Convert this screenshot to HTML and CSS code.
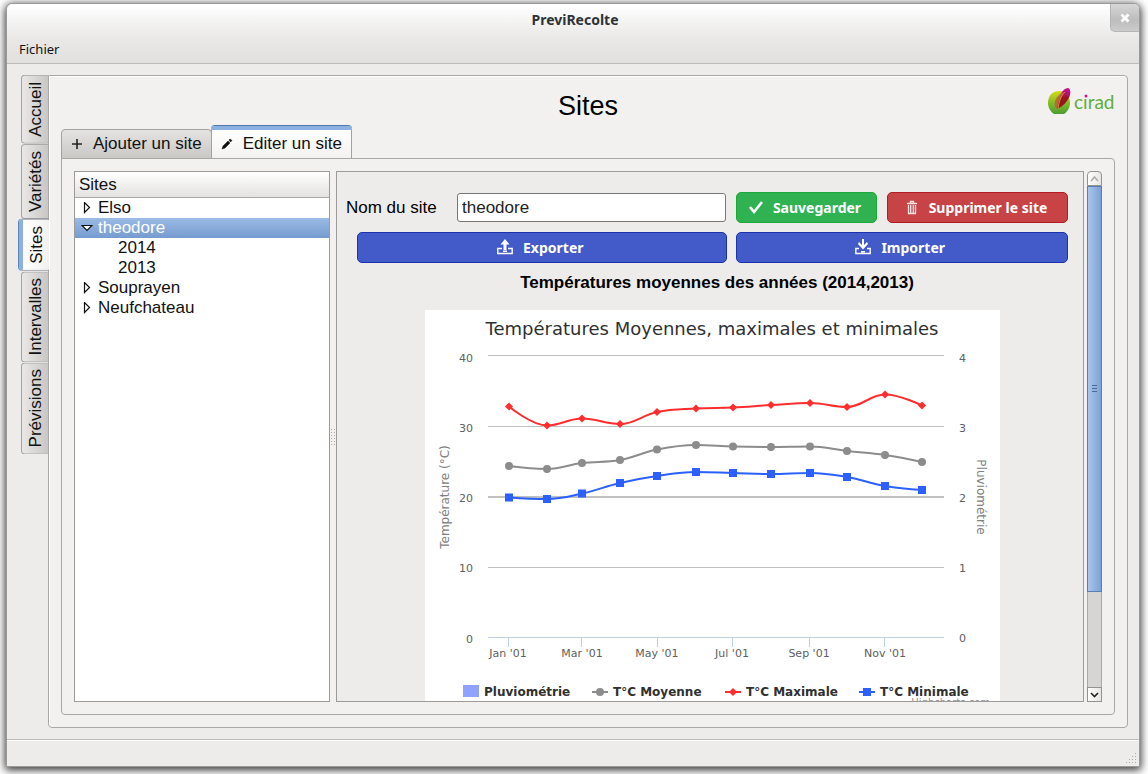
FILE: index.html
```html
<!DOCTYPE html>
<html lang="fr">
<head>
<meta charset="utf-8">
<title>PreviRecolte</title>
<link rel="stylesheet" href="styles.css">
</head>
<body>
<div class="window">
  <header class="titlebar">
    <h1 class="window-title">PreviRecolte</h1>
    <button class="close" type="button" aria-label="Fermer">
      <svg width="10" height="10" viewBox="0 0 10 10"><path d="M1.500 1.500l7 7M8.500 1.500l-7 7" stroke="#fff" stroke-width="2.800"/></svg>
    </button>
    <nav class="menubar"><button class="menu" type="button">Fichier</button></nav>
  </header>

  <main class="main">
    <nav class="side-tabs">
      <button class="side-tab" type="button">Accueil</button>
      <button class="side-tab" type="button">Variétés</button>
      <button class="side-tab side-tab-active" type="button">Sites</button>
      <button class="side-tab" type="button">Intervalles</button>
      <button class="side-tab" type="button">Prévisions</button>
    </nav>

    <section class="page">
      <div class="page-head">
        <h2 class="page-title">Sites</h2>
        <svg class="logo" width="70" height="30" viewBox="0 0 70 30" role="img" aria-label="cirad">
          <defs>
            <linearGradient id="leaf" x1="0" y1="0" x2="0" y2="1"><stop offset="0" stop-color="#d3dc18"/><stop offset=".55" stop-color="#7fb928"/><stop offset="1" stop-color="#4a9c33"/></linearGradient>
            <linearGradient id="seed" x1="0" y1="0" x2="0" y2="1"><stop offset="0" stop-color="#cf0a8c"/><stop offset=".3" stop-color="#b80d70"/><stop offset=".45" stop-color="#9c1420"/><stop offset="1" stop-color="#8e1a14"/></linearGradient>
          </defs>
          <path d="M11 4C18 4 22 10 22 16c0 5-3 9-6 11H6C3 25 0 21 0 16 0 9 4 4 11 4z" fill="url(#leaf)"/>
          <path d="M9 22C9 10 15 1 20 1c5 2 2 15-11 21z" fill="url(#seed)"/>
          <path d="M9 22C4 19 7 8 16 5c-4 5-6 10-7 17z" fill="#b5702c"/>
          <path d="M10 22C11 14 13 9 17 5" stroke="#d88a50" stroke-width="1" fill="none"/>
          <text class="logo-text" x="26" y="22">cırad</text>
          <circle cx="38" cy="9" r="1.500" fill="#d3118c"/>
        </svg>
      </div>

      <div class="tabs">
        <button class="tab" type="button">
          <svg width="12" height="12" viewBox="0 0 12 12"><path d="M6 1v10M1 6h10" stroke="#222" stroke-width="1.600"/></svg>
          Ajouter un site
        </button>
        <button class="tab tab-active" type="button">
          <svg width="12" height="12" viewBox="0 0 12 12"><path d="M1 11l1-3 5-5 2 2-5 5zM8 2l1-1 2 1.500-1.500 1.500z" fill="#111" stroke="#111" stroke-width=".5"/></svg>
          Editer un site
        </button>
      </div>

      <div class="panel">
        <div class="tree">
          <div class="tree-head">Sites</div>
          <ul class="tree-list">
            <li class="row"><svg class="arrow" width="12" height="12" viewBox="0 0 12 12"><path d="M3.500 .500v10l5-5z"/></svg>Elso</li>
            <li class="row row-selected"><svg class="arrow" width="12" height="12" viewBox="0 0 12 12"><path d="M1 3.500h10L6 8.500z"/></svg>theodore</li>
            <li class="row row-child">2014</li>
            <li class="row row-child">2013</li>
            <li class="row"><svg class="arrow" width="12" height="12" viewBox="0 0 12 12"><path d="M3.500 .500v10l5-5z"/></svg>Souprayen</li>
            <li class="row"><svg class="arrow" width="12" height="12" viewBox="0 0 12 12"><path d="M3.500 .500v10l5-5z"/></svg>Neufchateau</li>
          </ul>
        </div>
        <div class="splitter"><span class="grip"></span></div>

        <div class="detail">
          <form class="form">
            <div class="form-row">
              <label class="label" for="site-name">Nom du site</label>
              <input class="input" id="site-name" type="text" value="theodore">
              <button class="btn btn-save" type="button">
                <svg width="16" height="16" viewBox="0 0 16 16"><path d="M2 7l4 5 8-10" stroke="#fff" stroke-width="2.600" fill="none"/></svg>
                Sauvegarder
              </button>
              <button class="btn btn-delete" type="button">
                <svg width="16" height="16" viewBox="0 0 16 16"><path d="M3 3.500h10M6.500 3V1.500h3V3M4.500 5v8.500h7V5M6.700 5v8M9.300 5v8" stroke="#fbe3e3" stroke-width="1.300" fill="none"/></svg>
                Supprimer le site
              </button>
            </div>
            <div class="form-row form-row-files">
              <button class="btn btn-file btn-export" type="button">
                <svg width="18" height="18" viewBox="0 0 18 18"><path d="M6 9.500H1.800v5h14.400v-5H12M7 12.200h4" stroke="#fff" stroke-width="1.400" fill="none"/><path d="M9 0l4.500 5.500h-3V11h-3V5.500h-3z" fill="#fff"/></svg>
                Exporter
              </button>
              <button class="btn btn-file btn-import" type="button">
                <svg width="18" height="18" viewBox="0 0 18 18"><path d="M5 9.500H1.800v5h14.400v-5H13M7 12.700h4" stroke="#fff" stroke-width="1.400" fill="none"/><path d="M8 0h2v6l3-3 1 2-5 5.500L4 5l1-2 3 3z" fill="#fff"/></svg>
                Importer
              </button>
            </div>
          </form>
          <h3 class="chart-heading">Températures moyennes des années (2014,2013)</h3>
          <svg class="chart" width="575" height="400" viewBox="0 0 575 400">
            <rect width="575" height="400" fill="#fff"/>
            <text class="chart-title" x="287" y="25">Températures Moyennes, maximales et minimales</text>
            <path class="grid" d="M63 45.500H519M63 116.500H519M63 257.500H519"/>
            <path class="grid grid-strong" d="M63 187H519"/>
            <path class="axis" d="M63 327.500H519M83.500 328v9M156.500 328v9M232.500 328v9M307.500 328v9M384.500 328v9M459.500 328v9"/>
            <g class="tick tick-left">
              <text x="48" y="52">40</text><text x="48" y="122">30</text><text x="48" y="192">20</text><text x="48" y="262">10</text><text x="48" y="333">0</text>
            </g>
            <g class="tick">
              <text x="534" y="52">4</text><text x="534" y="122">3</text><text x="534" y="192">2</text><text x="534" y="262">1</text><text x="534" y="332">0</text>
            </g>
            <g class="tick tick-month">
              <text x="83" y="347">Jan '01</text><text x="157" y="347">Mar '01</text><text x="232" y="347">May '01</text><text x="307" y="347">Jul '01</text><text x="384" y="347">Sep '01</text><text x="460" y="347">Nov '01</text>
            </g>
            <text class="axis-title" transform="translate(24 187) rotate(-90)">Température (°C)</text>
            <text class="axis-title" transform="translate(552 187) rotate(90)">Pluviométrie</text>
            <g id="series"></g>
            <rect x="38" y="375" width="16" height="12" fill="#8fa2ff"/>
            <path d="M167 382h16" stroke="#8c8c8c" stroke-width="2"/><circle cx="175" cy="382" r="4" fill="#8c8c8c"/>
            <path d="M300 382h16" stroke="#ff2d2d" stroke-width="2"/><path d="M308 378l4 4-4 4-4-4z" fill="#ff2d2d"/>
            <path d="M434 382h16" stroke="#2b60ff" stroke-width="2"/><rect x="438" y="378" width="8" height="8" fill="#2b60ff"/>
            <g class="legend">
              <text x="59" y="386">Pluviométrie</text><text x="188" y="386">T°C Moyenne</text><text x="321" y="386">T°C Maximale</text><text x="455" y="386">T°C Minimale</text>
            </g>
            <text class="credit" x="565" y="396">Highcharts.com</text>
          </svg>
        </div>

        <div class="scrollbar">
          <button class="scroll-btn scroll-up" type="button" aria-label="Haut"><svg width="9" height="6" viewBox="0 0 9 6"><path d="M1 5l3.500-4L8 5" stroke="#aaa" stroke-width="1.500" fill="none"/></svg></button>
          <div class="track"><div class="thumb"><span class="thumb-grip"></span></div></div>
          <button class="scroll-btn" type="button" aria-label="Bas"><svg width="9" height="6" viewBox="0 0 9 6"><path d="M1 1l3.500 3.500L8 1" stroke="#222" stroke-width="1.600" fill="none"/></svg></button>
        </div>
      </div>
    </section>
  </main>

  <footer class="statusbar">
    <svg width="12" height="12" viewBox="0 0 12 12" fill="#aaa"><path d="M10 1h1v1h-1zM10 4h1v1h-1zM7 4h1v1h-1zM10 7h1v1h-1zM7 7h1v1h-1zM4 7h1v1h-1zM10 10h1v1h-1zM7 10h1v1h-1zM4 10h1v1h-1zM1 10h1v1h-1z"/></svg>
  </footer>
</div>
<script src="chart.js"></script>
</body>
</html>
```
FILE: styles.css
```css
* { box-sizing: border-box; }
body {
  margin: 0;
  min-height: 100vh;
  display: flex;
  padding: 3px 8px 8px 6px;
  background: #fff;
  font: 17px/20px "Liberation Sans", Arial, sans-serif;
  color: #111;
}
button { font: inherit; color: inherit; margin: 0; }
h1, h2, h3, ul { margin: 0; padding: 0; font-weight: normal; }
svg { flex: none; }

.window {
  flex: 1;
  min-width: 0;
  display: flex;
  flex-direction: column;
  border: 1px solid #9a9a9a;
  border-radius: 6px 6px 0 0;
  background: #edeceb;
  box-shadow: 0 2px 8px 1px rgba(0, 0, 0, .8);
}
.titlebar {
  position: relative;
  border-bottom: 1px solid #bcbbb9;
  border-radius: 6px 6px 0 0;
  background: linear-gradient(#fff, #e9e8e7 60%, #e1e0df);
  font-family: "Noto Sans", "Open Sans", sans-serif;
}
.window-title {
  height: 31px;
  padding-left: 4px;
  font-size: 14px;
  line-height: 31px;
  font-weight: 700;
  text-align: center;
  color: #2e3436;
}
.close {
  position: absolute;
  top: 0;
  right: 0;
  width: 29px;
  height: 28px;
  display: flex;
  align-items: center;
  justify-content: center;
  padding: 0;
  border: 1px solid #b5b5b5;
  border-width: 0 0 1px 1px;
  border-radius: 0 5px 0 5px;
  background: linear-gradient(#d6d6d6, #bdbdbd 60%, #cbcbcb);
}
.menubar { height: 28px; padding: 4px 12px; }
.menu { display: block; padding: 0; border: 0; background: none; font-size: 13px; line-height: 20px; }

.main {
  flex: 1;
  min-height: 0;
  display: flex;
  padding: 11px;
}
.side-tabs {
  display: flex;
  flex-direction: column;
  align-items: flex-end;
  width: 30px;
}
.side-tab {
  width: 27px;
  writing-mode: vertical-rl;
  transform: rotate(180deg);
  padding: 6px 0;
  line-height: 25px;
  border: 1px solid #a3a2a0;
  border-left: 0;
  border-radius: 0 4px 4px 0;
  background: linear-gradient(to left, #e9e8e6, #c8c7c4);
}
.side-tab-active {
  position: relative;
  width: 30px;
  margin-right: -1px;
  border-color: #8a8a8a;
  border-right: 4px solid #8cb0e0;
  box-shadow: 1px 0 0 #5b83b8;
  background: linear-gradient(to left, #fff, #f2f1f0);
}
.page {
  flex: 1;
  min-width: 0;
  display: flex;
  flex-direction: column;
  padding: 0 12px 12px;
  border: 1px solid #a9a8a6;
  border-radius: 0 4px 4px 4px;
  background: #f2f1f0;
  box-shadow: inset 1px 1px #fff;
}
.page-head {
  display: grid;
  grid-template-columns: 1fr auto 1fr;
  align-items: center;
  height: 50px;
  padding-top: 10px;
}
.page-title {
  grid-column: 2;
  font-size: 27px;
  line-height: 30px;
  color: #000;
}
.logo { justify-self: end; margin-bottom: 8px; margin-right: -3px; }
.logo-text { font: 19px "Lato", sans-serif; fill: #5fae38; }

.tabs { display: flex; align-items: flex-end; height: 33px; margin-bottom: -1px; }
.tab {
  display: flex;
  align-items: center;
  gap: 10px;
  height: 30px;
  padding: 0 9px;
  border: 1px solid #a3a2a0;
  border-radius: 4px 4px 0 0;
  background: linear-gradient(#e4e3e1, #c9c8c5);
  white-space: nowrap;
}
.tab-active {
  height: 33px;
  margin-left: -1px;
  padding-bottom: 2px;
  border-top: 4px solid #8cb0e0;
  border-bottom: 0;
  box-shadow: 0 -1px #4f79af;
  background: linear-gradient(#fff, #f2f1f0);
}
.panel {
  flex: 1;
  min-height: 0;
  display: flex;
  padding: 12px;
  border: 1px solid #a9a8a6;
  border-radius: 0 4px 4px 4px;
}
.tree {
  width: 256px;
  flex: none;
  border: 1px solid #9c9b99;
  background: #fff;
}
.tree-head {
  height: 26px;
  padding: 3px 4px;
  border-bottom: 1px solid #a9a8a6;
  background: linear-gradient(#fff, #e3e2e0);
}
.tree-list { list-style: none; }
.row { display: flex; align-items: center; gap: 5px; height: 20px; padding-left: 6px; line-height: 20px; }
.row-child { padding-left: 43px; }
.row-selected { color: #fff; background: linear-gradient(#9bbbe5, #759bcf); }
.arrow path { fill: #fff; stroke: #111; stroke-width: 1.200; }

.splitter { width: 6px; flex: none; display: flex; align-items: center; justify-content: center; }
.grip {
  width: 6px;
  height: 18px;
  background: radial-gradient(circle, #aaa 1px, transparent 1px) 0 0 / 3px 3px;
}
.detail {
  flex: 1;
  min-width: 0;
  height: 531px;
  min-height: 100%;
  overflow: hidden;
  padding: 20px 5px 0 9px;
  border: 1px solid #9c9b99;
  background: #edeceb;
}
.form { display: flex; flex-direction: column; gap: 9px; padding-right: 10px; }
.form-row { display: flex; align-items: center; gap: 10px; }
.form-row-files { padding-left: 11px; gap: 9px; }
.label { width: 101px; color: #000; white-space: nowrap; }
.input {
  flex: 1;
  min-width: 0;
  height: 29px;
  padding: 0 4px;
  border: 1px solid #787776;
  border-radius: 3px;
  background: #fff;
  font: inherit;
  color: #222;
}
.btn {
  display: flex;
  align-items: center;
  justify-content: center;
  gap: 9px;
  height: 31px;
  padding: 0 14px 0 10px;
  border: 1px solid;
  border-radius: 5px;
  font: 700 14px/20px "Noto Sans", "Open Sans", sans-serif;
  color: #fff;
  white-space: nowrap;
}
.btn-save { width: 141px; border-color: #1da83a; background: #30b253; }
.btn-delete { width: 181px; border-color: #b01c1f; background: #c74345; }
.btn-file { border-color: #1a33ad; background: #435bc9; }
.btn-export { flex: 371; }
.btn-import { flex: 331; }
.chart-heading {
  margin: 10px 0 17px;
  padding-left: 10px;
  font-size: 17px;
  line-height: 20px;
  font-weight: 700;
  text-align: center;
  color: #000;
}
.chart { display: block; margin: 0 auto; font-family: "DejaVu Sans", sans-serif; }
.chart-title { font-size: 18px; text-anchor: middle; fill: #303030; }
.grid { stroke: #c0c0c0; fill: none; }
.grid-strong { stroke-width: 2; }
.axis { stroke: #c0d0e0; fill: none; }
.tick { font-size: 11px; fill: #606060; }
.tick-left { text-anchor: end; }
.tick-month { text-anchor: middle; }
.axis-title { font-size: 12px; text-anchor: middle; fill: #808080; }
.legend { font-size: 12px; font-weight: 700; fill: #303030; }
.credit { font-size: 10px; text-anchor: end; fill: #909090; }

.scrollbar {
  width: 15px;
  flex: none;
  display: flex;
  flex-direction: column;
  margin-left: 3px;
}
.scroll-btn {
  height: 15px;
  display: flex;
  align-items: center;
  justify-content: center;
  padding: 0;
  border: 1px solid #93928f;
  background: linear-gradient(to right, #fff, #e6e5e3);
}
.scroll-up { border-radius: 4px 4px 0 0; }
.track { flex: 1; border: 1px solid #a9a8a6; border-width: 0 1px; background: #d6d5d3; }
.thumb {
  height: 81%;
  display: flex;
  align-items: center;
  justify-content: center;
  margin: 0 -1px;
  border: 1px solid #587fb4;
  background: linear-gradient(to right, #a9c6ec, #7ba1d5);
}
.thumb-grip { width: 5px; height: 7px; background: repeating-linear-gradient(#466a9c 0 1px, transparent 1px 3px); }

.statusbar {
  height: 27px;
  display: flex;
  align-items: flex-end;
  justify-content: flex-end;
  padding: 2px;
  border-top: 1px solid #bcbbb9;
  box-shadow: inset 0 1px #fff;
}
```
FILE: chart.js
```js
const xs = [84, 122, 157, 195, 232, 271, 308, 346, 385, 422, 460, 497];
const series = [
  { color: "#8c8c8c", marker: "circle", ys: [156, 159, 153, 150, 139.5, 135, 136.5, 137, 136.5, 141, 145, 152] },
  { color: "#ff2d2d", marker: "diamond", ys: [96.5, 115.5, 108.5, 114, 102, 98.5, 97.5, 95, 93, 97, 84.5, 95.5] },
  { color: "#2b60ff", marker: "square", ys: [187.5, 189, 183.5, 173, 166, 162, 163, 164, 163, 167, 176, 180] }
];

// Spline whose control points never pass the neighbouring extremes.
function spline(ys) {
  let d = `M${xs[0]} ${ys[0]}`;
  let out = [xs[0], ys[0]];
  for (let i = 1; i < xs.length; i++) {
    const x = xs[i], y = ys[i];
    let left = [x, y], right = [x, y];
    if (i < xs.length - 1) {
      const py = ys[i - 1], ny = ys[i + 1];
      let lx = (1.5 * x + xs[i - 1]) / 2.5, ly = (1.5 * y + py) / 2.5;
      let rx = (1.5 * x + xs[i + 1]) / 2.5, ry = (1.5 * y + ny) / 2.5;
      const fix = (ry - ly) * (rx - x) / (rx - lx) + y - ry;
      ly += fix;
      ry += fix;
      const lc = Math.min(Math.max(ly, Math.min(py, y)), Math.max(py, y));
      if (lc !== ly) { ly = lc; ry = 2 * y - ly; }
      const rc = Math.min(Math.max(ry, Math.min(ny, y)), Math.max(ny, y));
      if (rc !== ry) { ry = rc; ly = 2 * y - ry; }
      left = [lx, ly];
      right = [rx, ry];
    }
    d += ` C${out.join(" ")} ${left.join(" ")} ${x} ${y}`;
    out = right;
  }
  return d;
}

const shapes = {
  circle: (x, y) => `<circle cx="${x}" cy="${y}" r="4"/>`,
  diamond: (x, y) => `<path d="M${x} ${y - 4}l4 4-4 4-4-4z"/>`,
  square: (x, y) => `<rect x="${x - 4}" y="${y - 4}" width="8" height="8"/>`
};

document.getElementById("series").innerHTML = series.map(s =>
  `<path d="${spline(s.ys)}" fill="none" stroke="${s.color}" stroke-width="2"/>` +
  `<g fill="${s.color}">${xs.map((x, i) => shapes[s.marker](x, s.ys[i])).join("")}</g>`
).join("");
```
